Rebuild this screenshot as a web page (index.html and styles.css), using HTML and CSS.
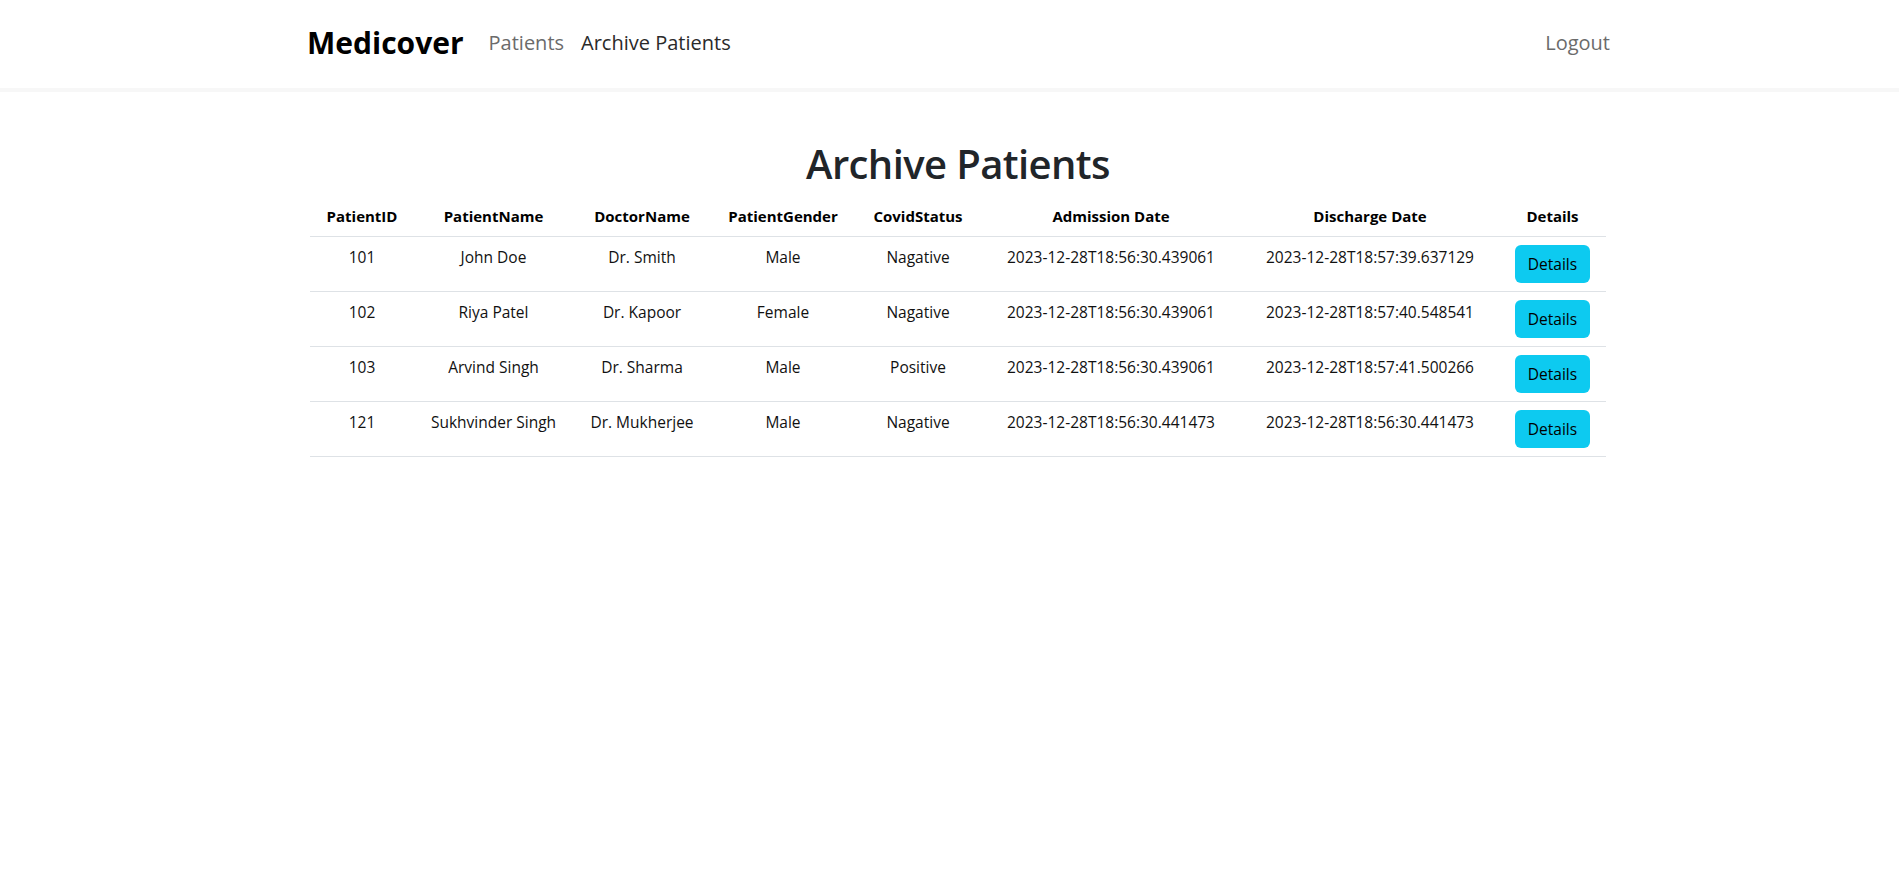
FILE: index.html
```html
<!DOCTYPE html>
<html lang="en">
<head>
<meta charset="utf-8">
<title>Medicover - Archive Patients</title>
<link rel="stylesheet" href="styles.css">
</head>
<body>
<header class="navbar">
  <div class="nav-inner">
    <div class="nav-left">
      <a class="brand" href="#">Medicover</a>
      <a class="nav-link" href="#">Patients</a>
      <a class="nav-link active" href="#">Archive Patients</a>
    </div>
    <a class="nav-link" href="#">Logout</a>
  </div>
</header>
<main class="container">
  <h1 class="title">Archive Patients</h1>
  <table class="table">
    <colgroup>
      <col class="c1"><col class="c2"><col class="c3"><col class="c4"><col class="c5"><col class="c6"><col class="c7"><col class="c8">
    </colgroup>
    <thead>
      <tr>
        <th>PatientID</th><th>PatientName</th><th>DoctorName</th><th>PatientGender</th><th>CovidStatus</th><th>Admission Date</th><th>Discharge Date</th><th>Details</th>
      </tr>
    </thead>
    <tbody>
      <tr>
        <td>101</td><td>John Doe</td><td>Dr. Smith</td><td>Male</td><td>Nagative</td><td>2023-12-28T18:56:30.439061</td><td>2023-12-28T18:57:39.637129</td><td><button class="btn">Details</button></td>
      </tr>
      <tr>
        <td>102</td><td>Riya Patel</td><td>Dr. Kapoor</td><td>Female</td><td>Nagative</td><td>2023-12-28T18:56:30.439061</td><td>2023-12-28T18:57:40.548541</td><td><button class="btn">Details</button></td>
      </tr>
      <tr>
        <td>103</td><td>Arvind Singh</td><td>Dr. Sharma</td><td>Male</td><td>Positive</td><td>2023-12-28T18:56:30.439061</td><td>2023-12-28T18:57:41.500266</td><td><button class="btn">Details</button></td>
      </tr>
      <tr>
        <td>121</td><td>Sukhvinder Singh</td><td>Dr. Mukherjee</td><td>Male</td><td>Nagative</td><td>2023-12-28T18:56:30.441473</td><td>2023-12-28T18:56:30.441473</td><td><button class="btn">Details</button></td>
      </tr>
    </tbody>
  </table>
</main>
</body>
</html>
```

FILE: styles.css
```css
* { box-sizing: border-box; }
html, body { margin: 0; padding: 0; background: #fff; }
body {
  font-family: "Open Sans", "Noto Sans", sans-serif;
  color: #212529;
  font-size: 16px;
  line-height: 1.5;
}
a { text-decoration: none; }

.navbar {
  height: 92px;
  border-bottom: 4px solid #f7f7f7;
  background: #fff;
}
.nav-inner {
  margin-left: 307px;
  width: 1303px;
  height: 86px;
  display: flex;
  align-items: center;
  justify-content: space-between;
}
.nav-left {
  display: flex;
  align-items: center;
  gap: 17px;
}
.brand {
  font-size: 30px;
  font-weight: 700;
  color: #000;
  margin-right: 8px;
  line-height: 1.2;
}
.nav-link {
  font-size: 20px;
  color: #6b6b6b;
  line-height: 1.5;
}
.nav-link.active { color: #2a2a2a; }

.container {
  margin-left: 310px;
  width: 1296px;
  padding-top: 48px;
}
.title {
  margin: 0 0 8px;
  font-size: 40px;
  font-weight: 600;
  letter-spacing: -0.6px;
  line-height: 1.2;
  text-align: center;
  color: #212529;
}
.table {
  width: 1296px;
  border-collapse: collapse;
  table-layout: fixed;
  color: #111;
}
.c1 { width: 104px; }
.c2 { width: 159px; }
.c3 { width: 138px; }
.c4 { width: 144px; }
.c5 { width: 126px; }
.c6 { width: 260px; }
.c7 { width: 258px; }
.c8 { width: 107px; }
.table th, .table td {
  padding: 8px;
  text-align: center;
  vertical-align: top;
  border-bottom: 1px solid #dee2e6;
  font-size: 15.5px;
  line-height: 24px;
  white-space: nowrap;
}
.table th { font-weight: 700; color: #000; font-size: 15px; }
.btn {
  font-family: inherit;
  font-size: 15.5px;
  line-height: 24px;
  padding: 7px 13px;
  height: 38px;
  background: #0dcaf0;
  color: #000;
  border: 0;
  border-radius: 6px;
  cursor: pointer;
}
```
